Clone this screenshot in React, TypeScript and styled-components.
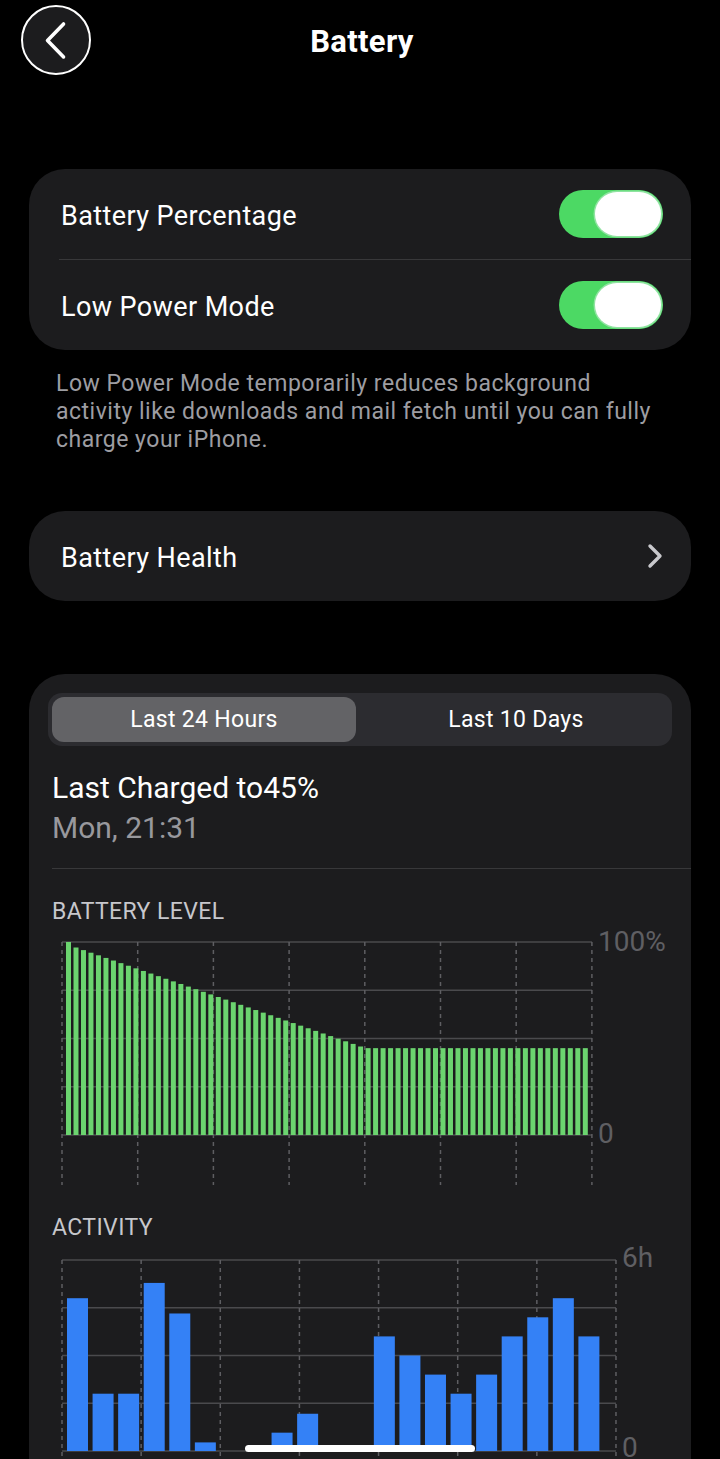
import React from 'react'
import styled, {createGlobalStyle} from 'styled-components'

const GlobalStyle = createGlobalStyle`
  html, body {
    margin: 0;
    padding: 0;
    background: #000;
  }
  body {
    font-family: Roboto, "Liberation Sans", sans-serif;
    -webkit-font-smoothing: antialiased;
  }
`

const Screen = styled.div`
  position: relative;
  width: 720px;
  height: 1459px;
  overflow: hidden;
  background: #000;
  color: #fff;
`

const Header = styled.header`
  display: grid;
  grid-template-columns: 70px 1fr 70px;
  align-items: center;
  padding: 5px 21px 0;
  height: 70px;
`

const BackButton = styled.button`
  box-sizing: border-box;
  width: 70px;
  height: 70px;
  padding: 0;
  border-radius: 50%;
  border: 2.5px solid #fff;
  background: #1c1c1e;
  display: flex;
  align-items: center;
  justify-content: center;
`

const Title = styled.h1`
  margin: 0;
  padding: 3px 0 0 4px;
  text-align: center;
  font-size: 31px;
  font-weight: 700;
  letter-spacing: 0.3px;
  line-height: 42px;
`

const Content = styled.main`
  padding: 0 29px;
`

const Card = styled.section<{ $gap: number }>`
  margin-top: ${p => p.$gap}px;
  background: #1c1c1e;
  border-radius: 36px;
`

const Row = styled.div`
  display: flex;
  align-items: center;
  justify-content: space-between;
  height: 90px;
  padding: 0 28px 0 32px;
  font-size: 27px;
  letter-spacing: 0.4px;

  & > span {
    padding-top: 3px;
  }
`

const Divider = styled.div<{ $inset: number }>`
  height: 1px;
  margin-left: ${p => p.$inset}px;
  background: #38383a;
`

const Toggle = styled.div`
  box-sizing: border-box;
  width: 104px;
  height: 48px;
  padding: 2px;
  border-radius: 24px;
  background: #4cd964;
  display: flex;
  justify-content: flex-end;
`

const Knob = styled.div`
  width: 66px;
  height: 44px;
  border-radius: 22px;
  background: #fff;
  box-shadow: 0 0 0 1.5px #8fe3a0;
`

const Footnote = styled.p`
  width: 606px;
  margin: 20px 0 0 27px;
  font-size: 23px;
  letter-spacing: 0.5px;
  line-height: 28px;
  color: #9d9da2;
`

const ChartCard = styled.section`
  margin-top: 73px;
  padding: 19px 19px 60px;
  background: #1c1c1e;
  border-radius: 36px;
`

const Segmented = styled.div`
  box-sizing: border-box;
  display: grid;
  grid-template-columns: 1fr 1fr;
  gap: 8px;
  height: 53px;
  padding: 4px;
  border-radius: 14px;
  background: #2c2c30;
`

const Tab = styled.div<{ $active?: boolean }>`
  display: flex;
  align-items: center;
  justify-content: center;
  border-radius: 12px;
  background: ${p => (p.$active ? '#636366' : 'transparent')};
  font-size: 23px;
  letter-spacing: 0.3px;
  color: #fff;
`

const Summary = styled.div`
  margin-top: 22px;
  padding: 0 4px;
  font-size: 30px;
  line-height: 40px;
`

const Muted = styled.div`
  color: #98989d;
`

const CardDivider = styled.div`
  height: 1px;
  margin: 20px -19px 0 4px;
  background: #38383a;
`

const SectionLabel = styled.div<{ $gap: number }>`
  margin-top: ${p => p.$gap}px;
  padding-left: 4px;
  font-size: 23px;
  letter-spacing: 0.4px;
  line-height: 28px;
  color: #c7c7cc;
`

const ChartSvg = styled.svg`
  display: block;
  margin-left: 4px;
  font-family: Roboto, "Liberation Sans", sans-serif;
`

const HomeIndicator = styled.div`
  position: absolute;
  left: 245px;
  bottom: 7px;
  width: 230px;
  height: 7px;
  border-radius: 4px;
  background: #fff;
`

const GRID = '#4a4a4d'
const DASH = '#5e5e62'
const AXIS_TEXT = '#5f5f63'

const batteryLevels = Array.from({length: 70}, (_, i) =>
	i === 0 ? 100 : Math.max(45, 98.5 - i * 1.35)
)

const activity = [0.8, 0.3, 0.3, 0.88, 0.72, 0.045, 0, 0, 0.096, 0.195, 0, 0,
	0.6, 0.5, 0.4, 0.3, 0.4, 0.6, 0.7, 0.8, 0.6]

const BatteryChart = () => {
	const top = 16
	const bottom = 209
	const h = bottom - top
	return (
		<ChartSvg width={620} height={262}>
			{Array.from({length: 5}, (_, j) => (
				<line key={'h' + j} x1={10} x2={540} y1={top + j * h / 4} y2={top + j * h / 4}
					  stroke={GRID} strokeWidth={1.5}/>
			))}
			{Array.from({length: 8}, (_, k) => (
				<line key={'v' + k} x1={10 + k * 75.7} x2={10 + k * 75.7} y1={top} y2={259}
					  stroke={DASH} strokeWidth={1.5} strokeDasharray="4 4"/>
			))}
			{batteryLevels.map((v, i) => {
				const bh = v / 100 * h
				return <rect key={i} x={14 + i * 7.49} y={bottom - bh} width={5} height={bh} fill="#6bd46f"/>
			})}
			<text x={546} y={25} fontSize={28} fill={AXIS_TEXT}>100%</text>
			<text x={546} y={217} fontSize={28} fill={AXIS_TEXT}>0</text>
		</ChartSvg>
	)
}

const ActivityChart = () => {
	const top = 18
	const bottom = 209
	const h = bottom - top
	return (
		<ChartSvg width={620} height={240}>
			{Array.from({length: 5}, (_, j) => (
				<line key={'h' + j} x1={10} x2={564} y1={top + j * h / 4} y2={top + j * h / 4}
					  stroke={GRID} strokeWidth={1.5}/>
			))}
			{Array.from({length: 8}, (_, k) => (
				<line key={'v' + k} x1={10 + k * 79.14} x2={10 + k * 79.14} y1={top} y2={240}
					  stroke={DASH} strokeWidth={1.5} strokeDasharray="4 4"/>
			))}
			{activity.map((f, i) => {
				const bh = f * h
				return bh > 0 ? <rect key={i} x={15 + i * 25.57} y={bottom - bh} width={21} height={bh} fill="#3481f6"/> : null
			})}
			<text x={570} y={25} fontSize={28} fill={AXIS_TEXT}>6h</text>
			<text x={570} y={215} fontSize={28} fill={AXIS_TEXT}>0</text>
		</ChartSvg>
	)
}

const Switch = () => (
	<Toggle>
		<Knob/>
	</Toggle>
)

const App = () => {
	return (
		<Screen>
			<GlobalStyle/>
			<Header>
				<BackButton aria-label="Back">
					<svg width="70" height="70" viewBox="0 0 70 70">
						<path d="M43 18 L26 35.5 L43 53" fill="none" stroke="#fff" strokeWidth={3.8}
							  strokeLinecap="round" strokeLinejoin="round"/>
					</svg>
				</BackButton>
				<Title>Battery</Title>
				<div/>
			</Header>

			<Content>
				<Card $gap={94}>
					<Row>
						<span>Battery Percentage</span>
						<Switch/>
					</Row>
					<Divider $inset={30}/>
					<Row>
						<span>Low Power Mode</span>
						<Switch/>
					</Row>
				</Card>
				<Footnote>
					Low Power Mode temporarily reduces background activity like downloads and mail fetch until you can fully charge your iPhone.
				</Footnote>

				<Card $gap={57}>
					<Row>
						<span>Battery Health</span>
						<svg width="16" height="26" viewBox="0 0 16 26">
							<path d="M3 3 L13 13 L3 23" fill="none" stroke="#c8c8cc" strokeWidth={3.4}
								  strokeLinecap="round" strokeLinejoin="round"/>
						</svg>
					</Row>
				</Card>

				<ChartCard>
					<Segmented>
						<Tab $active>Last 24 Hours</Tab>
						<Tab>Last 10 Days</Tab>
					</Segmented>
					<Summary>
						<div>Last Charged to45%</div>
						<Muted>Mon, 21:31</Muted>
					</Summary>
					<CardDivider/>
					<SectionLabel $gap={29}>BATTERY LEVEL</SectionLabel>
					<BatteryChart/>
					<SectionLabel $gap={26}>ACTIVITY</SectionLabel>
					<ActivityChart/>
				</ChartCard>
			</Content>
			<HomeIndicator/>
		</Screen>
	)
}

export default App
